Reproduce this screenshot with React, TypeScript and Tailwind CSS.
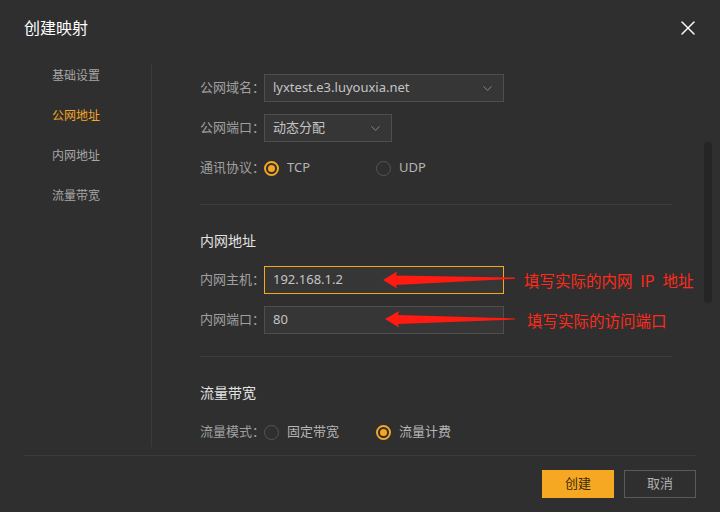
import { X, ChevronDown } from "lucide-react";

const navItems = ["基础设置", "公网地址", "内网地址", "流量带宽"];

function Radio({ checked, label }: { checked?: boolean; label: string }) {
  return (
    <div className="flex items-center w-[112px]">
      {checked ? (
        <span className="w-[15px] h-[15px] rounded-full border-2 border-[#f5a623] flex items-center justify-center">
          <span className="w-[7px] h-[7px] rounded-full bg-[#f5a623]" />
        </span>
      ) : (
        <span className="w-[15px] h-[15px] rounded-full border border-[#555]" />
      )}
      <span className="ml-2 text-[13px] text-[#b4b4b4]">{label}</span>
    </div>
  );
}

function Row({ label, children }: { label: string; children: React.ReactNode }) {
  return (
    <div className="flex items-center h-7">
      <span className="w-16 flex-none whitespace-nowrap text-[13px] text-[#a0a0a0]">{label}</span>
      {children}
    </div>
  );
}

function Field({ value, active, select, width = "w-[240px]" }: { value: string; active?: boolean; select?: boolean; width?: string }) {
  return (
    <div
      className={
        width +
        " h-7 flex items-center justify-between px-2 bg-[#363636] border " +
        (active ? "border-[#f5a623]" : "border-[#4e4e4e]")
      }
    >
      <span className="text-[13px] text-[#c4c4c4]">{value}</span>
      {select && <ChevronDown size={15} className="text-[#8a8a8a]" strokeWidth={1.5} />}
    </div>
  );
}

export default function App() {
  return (
    <div className="relative w-[720px] h-[512px] bg-[#2f2f2f] overflow-hidden font-['Noto_Sans','Noto_Sans_CJK_SC',sans-serif]">
      {/* 标题 */}
      <div className="h-16 flex items-start justify-between pl-6 pr-5 pt-4">
        <h1 className="text-base leading-6 text-white">创建映射</h1>
        <X size={24} strokeWidth={1.4} className="text-white" />
      </div>

      {/* 主体 */}
      <div className="flex h-[383px]">
        <nav className="w-[152px] border-r border-[#3b3b3b] pl-[52px] pt-0.5 flex flex-col gap-5">
          {navItems.map((item, i) => (
            <div key={item} className={"h-5 leading-5 text-xs " + (i === 1 ? "text-[#f5a623]" : "text-[#a6a6a6]")}>
              {item}
            </div>
          ))}
        </nav>

        <div className="flex-1 flex overflow-hidden">
          <div className="w-[520px] pl-12 pt-2.5">
            <div className="flex flex-col gap-3">
              <Row label="公网域名：">
                <Field value="lyxtest.e3.luyouxia.net" select />
              </Row>
              <Row label="公网端口：">
                <Field value="动态分配" select width="w-[128px]" />
              </Row>
              <Row label="通讯协议：">
                <Radio checked label="TCP" />
                <Radio label="UDP" />
              </Row>
            </div>

            <div className="mt-[22px] h-px bg-[#3b3b3b]" />

            <h2 className="mt-[26px] text-sm leading-5 text-[#e2e2e2]">内网地址</h2>
            <div className="mt-[15px] flex flex-col gap-3">
              <Row label="内网主机：">
                <Field value="192.168.1.2" active />
              </Row>
              <Row label="内网端口：">
                <Field value="80" />
              </Row>
            </div>

            <div className="mt-[22px] h-px bg-[#3b3b3b]" />

            <h2 className="mt-[26px] text-sm leading-5 text-[#e2e2e2]">流量带宽</h2>
            <div className="mt-[15px] flex flex-col gap-3">
              <Row label="流量模式：">
                <Radio label="固定带宽" />
                <Radio checked label="流量计费" />
              </Row>
            </div>
          </div>

          <div className="ml-auto mr-2 mt-[78px] w-2 h-[161px] rounded-full bg-[#252525]" />
        </div>
      </div>

      {/* 底部 */}
      <div className="mx-6 mt-2 border-t border-[#3b3b3b] pt-[14px] flex justify-end gap-2.5">
        <button className="w-[72px] h-7 bg-[#f7a823] text-[13px] text-[#3a2a0a]">创建</button>
        <button className="w-[72px] h-7 border border-[#5a5a5a] text-[13px] text-[#b0b0b0]">取消</button>
      </div>

      {/* 标注 */}
      <svg className="absolute left-0 top-0 pointer-events-none" width="720" height="512">
        <polygon points="383,280 397,271.5 396,275.5 515,277.6 515,278.8 396,285 397,288.5" fill="#ff1a12" />
        <polygon points="385,319 399,311 398,315 515,318.4 515,319.6 398,324 399,327.5" fill="#ff1a12" />
      </svg>
      <div className="absolute left-[524px] top-[269px] whitespace-nowrap text-[15.5px] leading-[22px] text-[#ff2a1a] font-['Noto_Sans_CJK_SC',sans-serif]">
        填写实际的内网{"\u2002"}IP{"\u2002"}地址
      </div>
      <div className="absolute left-[527px] top-[309px] whitespace-nowrap text-[15.5px] leading-[22px] text-[#ff2a1a] font-['Noto_Sans_CJK_SC',sans-serif]">
        填写实际的访问端口
      </div>
    </div>
  );
}
